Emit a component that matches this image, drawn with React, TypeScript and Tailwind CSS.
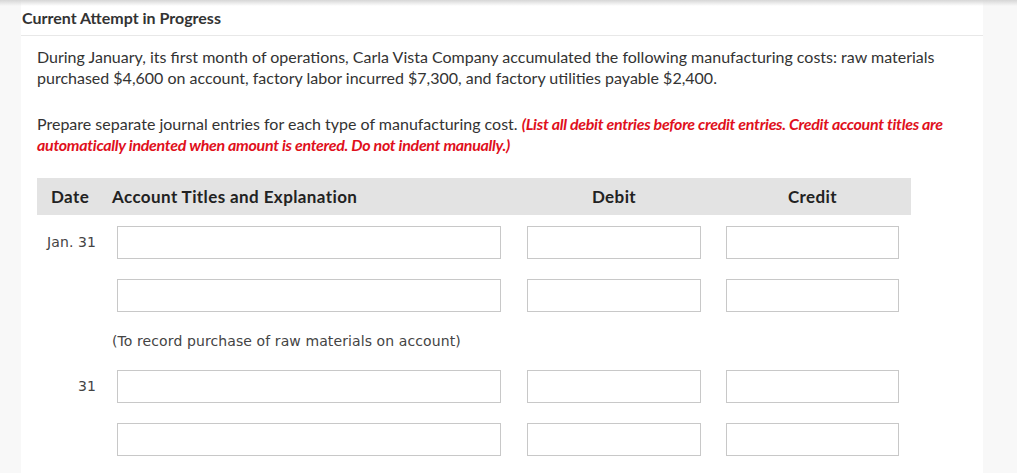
import React from 'react';

const rows = [
  { date: 'Jan. 31', note: '(To record purchase of raw materials on account)' },
  { date: '31', note: '' },
];

const Box: React.FC<{ className?: string }> = ({ className = '' }) => (
  <input
    type="text"
    className={`h-[33px] border border-[#c8c8c8] bg-white outline-none ${className}`}
  />
);

export default function App() {
  return (
    <div className="relative h-[473px] w-full overflow-hidden bg-[#f8f8f8] font-['Lato',sans-serif] text-[#333]">
      <div className="pointer-events-none absolute inset-x-0 top-0 h-[6px] bg-gradient-to-b from-[#d6d6d6] to-transparent" />

      <div className="ml-[21px] h-full w-[962px] bg-white">
        <div className="flex h-[36px] items-center border-b border-[#e8e8e8] pl-px text-[16px] font-bold leading-none">
          Current Attempt in Progress
        </div>

        <div className="pl-[16px]">
          <p className="mt-[10px] w-[920px] text-[16px] leading-[21px]">
            During January, its first month of operations, Carla Vista Company accumulated the following manufacturing costs: raw materials purchased $4,600 on account, factory labor incurred $7,300, and factory utilities payable $2,400.
          </p>

          <p className="mt-[25px] w-[920px] text-[16px] leading-[21px]">
            Prepare separate journal entries for each type of manufacturing cost.{' '}
            <span className="font-bold italic tracking-[-0.3px] text-[#e0101c]">
              (List all debit entries before credit entries. Credit account titles are automatically indented when amount is entered. Do not indent manually.)
            </span>
          </p>

          <div className="mt-[23px] w-[874px]">
            <div className="flex h-[37px] items-center bg-[#e3e3e3] text-[17px] font-bold tracking-[0.4px] text-[#222]">
              <div className="w-[75px] pl-[14px]">Date</div>
              <div className="w-[415px]">Account Titles and Explanation</div>
              <div className="w-[174px] text-center">Debit</div>
              <div className="ml-[25px] w-[173px] text-center">Credit</div>
            </div>

            <div className="pt-[11px] font-['DejaVu_Sans',sans-serif] text-[14px] tracking-[0.1px] text-[#444]">
              {rows.map((r, i) => (
                <div key={i} className={i > 0 ? 'mt-[19px]' : ''}>
                  <div className="flex items-center">
                    <div className="w-[59px] text-right">{r.date}</div>
                    <div className="w-[21px]" />
                    <Box className="w-[384px]" />
                    <Box className="ml-[26px] w-[174px]" />
                    <Box className="ml-[25px] w-[173px]" />
                  </div>
                  <div className="mt-[20px] flex items-center">
                    <div className="w-[80px]" />
                    <Box className="w-[384px]" />
                    <Box className="ml-[26px] w-[174px]" />
                    <Box className="ml-[25px] w-[173px]" />
                  </div>
                  {r.note && (
                    <div className="mt-[19px] pl-[75px] leading-[20px]">{r.note}</div>
                  )}
                </div>
              ))}
            </div>
          </div>
        </div>
      </div>
    </div>
  );
}
